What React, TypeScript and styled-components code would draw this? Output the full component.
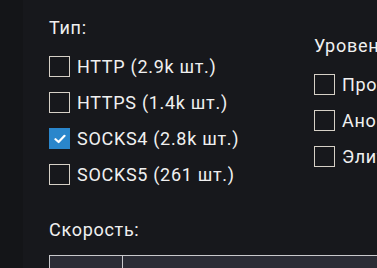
import React from 'react'
import styled, { createGlobalStyle } from 'styled-components'

const Global = createGlobalStyle`
  html, body { margin: 0; padding: 0; background: #17181c; }
  body { font-family: Roboto, "Liberation Sans", sans-serif; color: #f0f0f0; }
`

const Page = styled.div`
  display: flex;
  width: 377px;
  height: 268px;
  overflow: hidden;
  background: #17181c;
`

const SideStrip = styled.div`
  width: 23px;
  flex-shrink: 0;
  background: #141518;
`

const Content = styled.div`
  flex: 1;
  min-width: 0;
  padding: 16px 0 0 26px;
`

const FilterRow = styled.div`
  display: flex;
  align-items: center;
`

const Column = styled.div<{ $width: number }>`
  width: ${p => p.$width}px;
  flex-shrink: 0;
  display: flex;
  flex-direction: column;
`

const Heading = styled.div`
  font-size: 18px;
  line-height: 24px;
  letter-spacing: 0.7px;
  margin-bottom: 16px;
  white-space: nowrap;
`

const Option = styled.label`
  display: flex;
  align-items: center;
  height: 21px;
  margin-bottom: 15px;
  font-size: 18px;
  letter-spacing: 0.7px;
  white-space: nowrap;
`

const Box = styled.span<{ $checked?: boolean }>`
  width: 21px;
  height: 21px;
  flex-shrink: 0;
  margin-right: 7px;
  box-sizing: border-box;
  display: flex;
  align-items: center;
  justify-content: center;
  border: 1px solid ${p => (p.$checked ? '#2a86cb' : '#d6d0c6')};
  background: ${p => (p.$checked ? '#2a86cb' : 'transparent')};
`

const SpeedLabel = styled(Heading)`
  margin-top: 18px;
  margin-bottom: 13px;
`

const SpeedBar = styled.div`
  display: flex;
  height: 20px;
  border-top: 1px solid #c9c9cc;
  border-left: 1px solid #c9c9cc;
  background: #2b2c35;
`

const SpeedCell = styled.div<{ $w?: number }>`
  width: ${p => (p.$w ? `${p.$w}px` : 'auto')};
  flex: ${p => (p.$w ? '0 0 auto' : '1')};
  border-right: 1px solid #c9c9cc;
  &:last-child { border-right: none; }
`

const Check = () => (
  <svg width="12" height="10" viewBox="0 0 12 10">
    <path d="M1.5 5.2 L4.6 8 L10.5 1.8" fill="none" stroke="#fff" strokeWidth="2.2" strokeLinecap="round" strokeLinejoin="round" />
  </svg>
)

const Item = ({ label, checked }: { label: string; checked?: boolean }) => (
  <Option>
    <Box $checked={checked}>{checked && <Check />}</Box>
    {label}
  </Option>
)

export default function App() {
  return (
    <Page>
      <Global />
      <SideStrip />
      <Content>
        <FilterRow>
          <Column $width={265}>
            <Heading>Тип:</Heading>
            <Item label="HTTP (2.9k шт.)" />
            <Item label="HTTPS (1.4k шт.)" />
            <Item label="SOCKS4 (2.8k шт.)" checked />
            <Item label="SOCKS5 (261 шт.)" />
          </Column>
          <Column $width={220}>
            <Heading>Уровень анонимности:</Heading>
            <Item label="Прозрачный" />
            <Item label="Анонимный" />
            <Item label="Элитный" />
          </Column>
        </FilterRow>
        <SpeedLabel>Скорость:</SpeedLabel>
        <SpeedBar>
          <SpeedCell $w={72} />
          <SpeedCell />
        </SpeedBar>
      </Content>
    </Page>
  )
}
